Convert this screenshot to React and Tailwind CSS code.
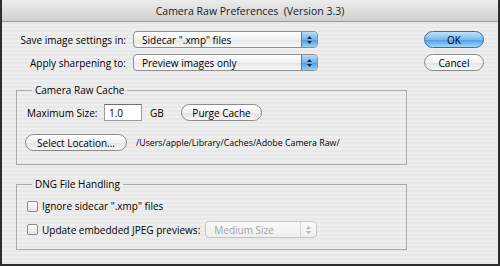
import React from 'react';

const font = { fontFamily: '"Lucida Grande", "Open Sans", sans-serif' };

const Stepper = ({ disabled }) => (
  <div
    className={
      disabled
        ? 'w-[16px] h-full flex items-center justify-center border-l border-[#d4d4d4]'
        : 'w-[16px] h-full flex items-center justify-center rounded-r-[4px] border-l border-[#4a7fb8] bg-[linear-gradient(#b8dcf7,#72b3ea_50%,#4c9ae0_51%,#9bd0f6)]'
    }
  >
    <svg width="7" height="10" viewBox="0 0 7 10">
      <path d="M3.5 1 L6 4 H1 Z" fill={disabled ? '#b5b5b5' : '#1c2a3a'} />
      <path d="M3.5 9 L6 6 H1 Z" fill={disabled ? '#b5b5b5' : '#1c2a3a'} />
    </svg>
  </div>
);

const Popup = ({ label, width, disabled }) => (
  <div
    className={`h-[17px] flex items-center rounded-[4px] border overflow-hidden ${
      disabled
        ? 'border-[#c4c4c4] bg-[linear-gradient(#fafafa,#eeeeee)] text-[#a4a4a4]'
        : 'border-[#8f8f8f] bg-[linear-gradient(#ffffff,#f1f1f1_50%,#e6e6e6_51%,#f7f7f7)] text-black'
    } ${width}`}
  >
    <span className="flex-1 pl-[8px] leading-none whitespace-nowrap">{label}</span>
    <Stepper disabled={disabled} />
  </div>
);

const PillButton = ({ children, className = '' }) => (
  <div
    className={`h-[17px] flex items-center justify-center rounded-full border border-[#8a8a8a] bg-[linear-gradient(#ffffff,#f2f2f2_50%,#e2e2e2_51%,#f8f8f8)] leading-none whitespace-nowrap ${className}`}
  >
    {children}
  </div>
);

const Checkbox = ({ label }) => (
  <label className="flex items-center gap-[4px] whitespace-nowrap">
    <span className="w-[11px] h-[11px] rounded-[2px] border border-[#8c8c8c] bg-[linear-gradient(#ffffff,#e4e4e4)]" />
    <span>{label}</span>
  </label>
);

export default function App() {
  return (
    <div
      style={font}
      className="w-[500px] h-[266px] flex flex-col border-x-2 border-b-2 border-[#2e2e2e] bg-[repeating-linear-gradient(180deg,#eeeeee_0px,#eeeeee_2px,#e8e8e8_2px,#e8e8e8_4px)] text-[10px] leading-[14px] text-black overflow-hidden"
    >
      <div className="h-[22px] shrink-0 flex items-center justify-center border-b border-[#9c9c9c] bg-[linear-gradient(#ececec,#d0d0d0)] text-[10.5px] text-[#1a1a1a]">
        Camera Raw Preferences&nbsp;&nbsp;(Version 3.3)
      </div>

      <div className="flex flex-col px-[14px] pt-[9px]">
        <div className="flex justify-between">
          <div className="flex flex-col gap-[6px]">
            <div className="flex items-center gap-[7px]">
              <span className="w-[110px] text-right whitespace-nowrap">Save image settings in:</span>
              <Popup label={'Sidecar ".xmp" files'} width="w-[185px]" />
            </div>
            <div className="flex items-center gap-[7px]">
              <span className="w-[110px] text-right whitespace-nowrap">Apply sharpening to:</span>
              <Popup label="Preview images only" width="w-[185px]" />
            </div>
          </div>
          <div className="flex flex-col gap-[6px]">
            <div className="w-[60px] h-[17px] flex items-center justify-center rounded-full border border-[#3b6ea6] bg-[linear-gradient(#c2e2fa,#7cbaee_50%,#4e9be2_51%,#a4d6f8)] leading-none">
              OK
            </div>
            <PillButton className="w-[60px]">Cancel</PillButton>
          </div>
        </div>

        <fieldset className="mt-[12px] w-[391px] h-[82px] border border-[#a9a9a9] pl-[10px] pt-[7px]">
          <legend className="ml-[5px] px-[3px] leading-[14px]">Camera Raw Cache</legend>
          <div className="flex items-center h-[17px]">
            <span className="w-[70px] whitespace-nowrap">Maximum Size:</span>
            <div className="ml-[7px] w-[38px] h-[17px] flex items-center px-[4px] bg-white border border-[#9a9a9a] border-t-[#6c6c6c]">
              1.0
            </div>
            <span className="ml-[8px] w-[13px]">GB</span>
            <PillButton className="ml-[18px] w-[81px]">Purge Cache</PillButton>
          </div>
          <div className="flex items-center mt-[13px]">
            <PillButton className="-ml-[2px] w-[102px]">Select Location...</PillButton>
            <span className="ml-[9px] text-[8.8px] whitespace-nowrap">/Users/apple/Library/Caches/Adobe Camera Raw/</span>
          </div>
        </fieldset>

        <fieldset className="mt-[12px] w-[391px] h-[73px] border border-[#a9a9a9] pl-[10px] pt-[8px]">
          <legend className="ml-[5px] px-[3px] leading-[14px]">DNG File Handling</legend>
          <div className="flex flex-col gap-[8px]">
            <Checkbox label={'Ignore sidecar ".xmp" files'} />
            <div className="flex items-center gap-[5px]">
              <Checkbox label="Update embedded JPEG previews:" />
              <Popup label="Medium Size" width="w-[112px]" disabled />
            </div>
          </div>
        </fieldset>
      </div>
    </div>
  );
}
